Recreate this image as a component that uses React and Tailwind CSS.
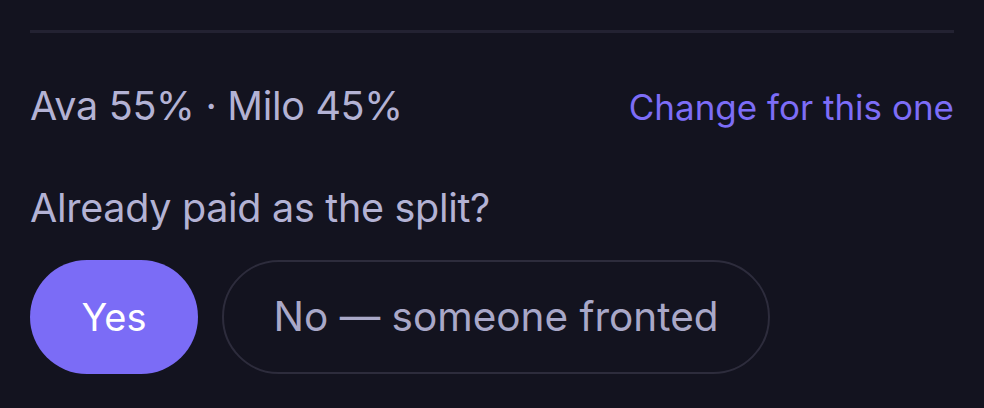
export default function App() {
  return (
    <div className="w-[984px] h-[408px] bg-[#13131f] px-[30px] overflow-hidden" style={{ fontFamily: "Inter, 'Noto Sans', sans-serif" }}>
      <div className="pt-[30px]">
        <div className="h-[3px] bg-[#232232]" />
      </div>
      <div className="flex items-center justify-between mt-[52px] h-[44px]">
        <div className="text-[39.5px] text-[#b3b2d4] tracking-[-0.3px]">Ava 55% · Milo 45%</div>
        <button className="text-[35px] text-[#7d6df7]">Change for this one</button>
      </div>
      <div className="mt-[57px] text-[39.5px] text-[#b3b2d4] leading-[44px] tracking-[-0.3px]">Already paid as the split?</div>
      <div className="flex gap-[24px] mt-[30px]">
        <button className="h-[114px] w-[168px] rounded-full bg-[#7b6cf6] text-white text-[38px]">Yes</button>
        <button className="h-[114px] w-[548px] rounded-full border-2 border-[#2d2c3c] text-[#a9a8c8] text-[40.5px]">No — someone fronted</button>
      </div>
    </div>
  );
}
